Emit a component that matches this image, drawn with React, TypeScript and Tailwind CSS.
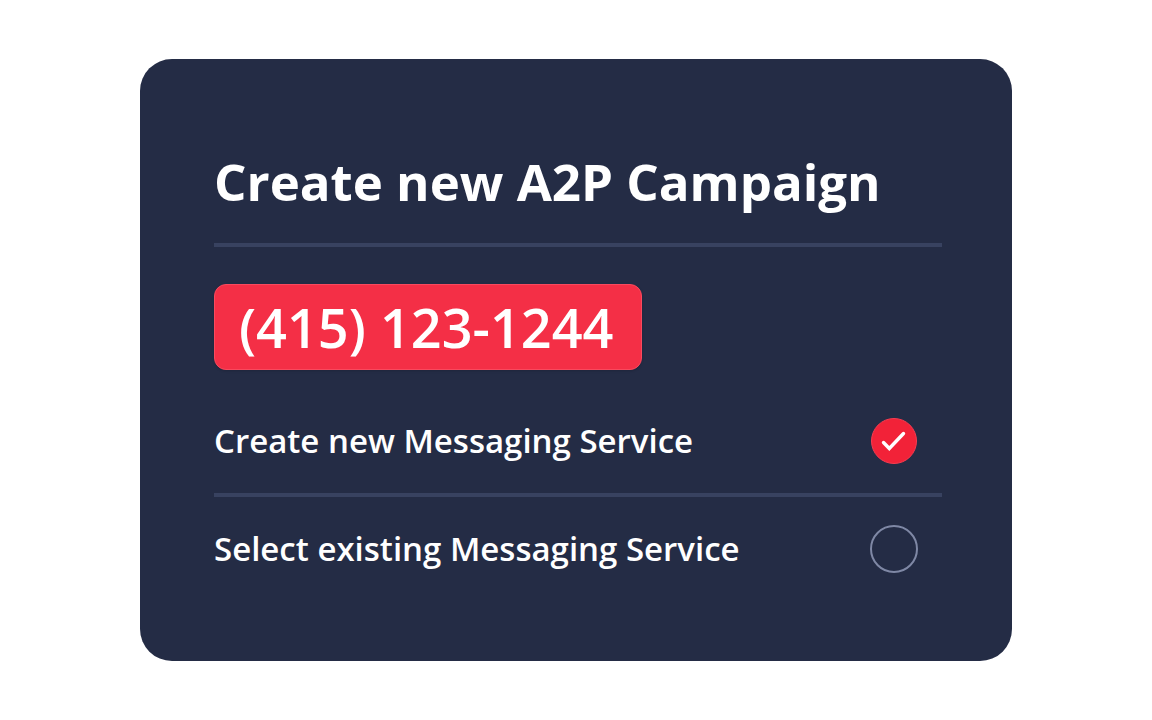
import { useState } from 'react';

const options = [
    { id: 'create', label: 'Create new Messaging Service' },
    { id: 'existing', label: 'Select existing Messaging Service' },
];

export default function App() {
    const [selected, setSelected] = useState('create');

    return (
        <main className="flex min-h-screen items-center justify-center bg-white px-35 font-['Open_Sans',sans-serif] text-white">
            <form className="w-full rounded-[32px] bg-[#242c45] pt-20 pr-[70px] pb-[60px] pl-[74px]">
                <h1 className="border-b-4 border-[#384260] pb-5 text-[51px] leading-[84px] font-bold whitespace-nowrap">
                    Create new A2P Campaign
                </h1>

                {/* Phone number */}
                <div className="mt-[37px] flex h-[86px] w-[428px] items-center rounded-xl border border-[#f94a5e] bg-[#f42f46] px-6 text-[54px] leading-none font-semibold whitespace-nowrap shadow">
                    (415) 123-1244
                </div>

                {/* Messaging service options */}
                <fieldset className="mt-[19px]">
                    {options.map((option) => (
                        <label
                            key={option.id}
                            className="box-content flex h-[104px] cursor-pointer items-center justify-between border-[#384260] pr-6 text-[33px] font-semibold not-last:border-b-4"
                        >
                            <span className="whitespace-nowrap">{option.label}</span>
                            <span className="relative flex size-12 items-center justify-center">
                                <input
                                    type="radio"
                                    name="service"
                                    value={option.id}
                                    checked={selected === option.id}
                                    onChange={() => setSelected(option.id)}
                                    className="size-12 appearance-none rounded-full border-2 border-[#7f88a5] checked:size-[46px] checked:border checked:border-[#f83c50] checked:bg-[#f22238]"
                                />
                                {selected === option.id && (
                                    <svg className="pointer-events-none absolute size-12" viewBox="0 0 48 48" fill="none" stroke="white">
                                        <path d="M13.5 25.5l5.8 6L33.5 16.5" strokeWidth="3.4" strokeLinecap="round" />
                                    </svg>
                                )}
                            </span>
                        </label>
                    ))}
                </fieldset>
            </form>
        </main>
    );
}
